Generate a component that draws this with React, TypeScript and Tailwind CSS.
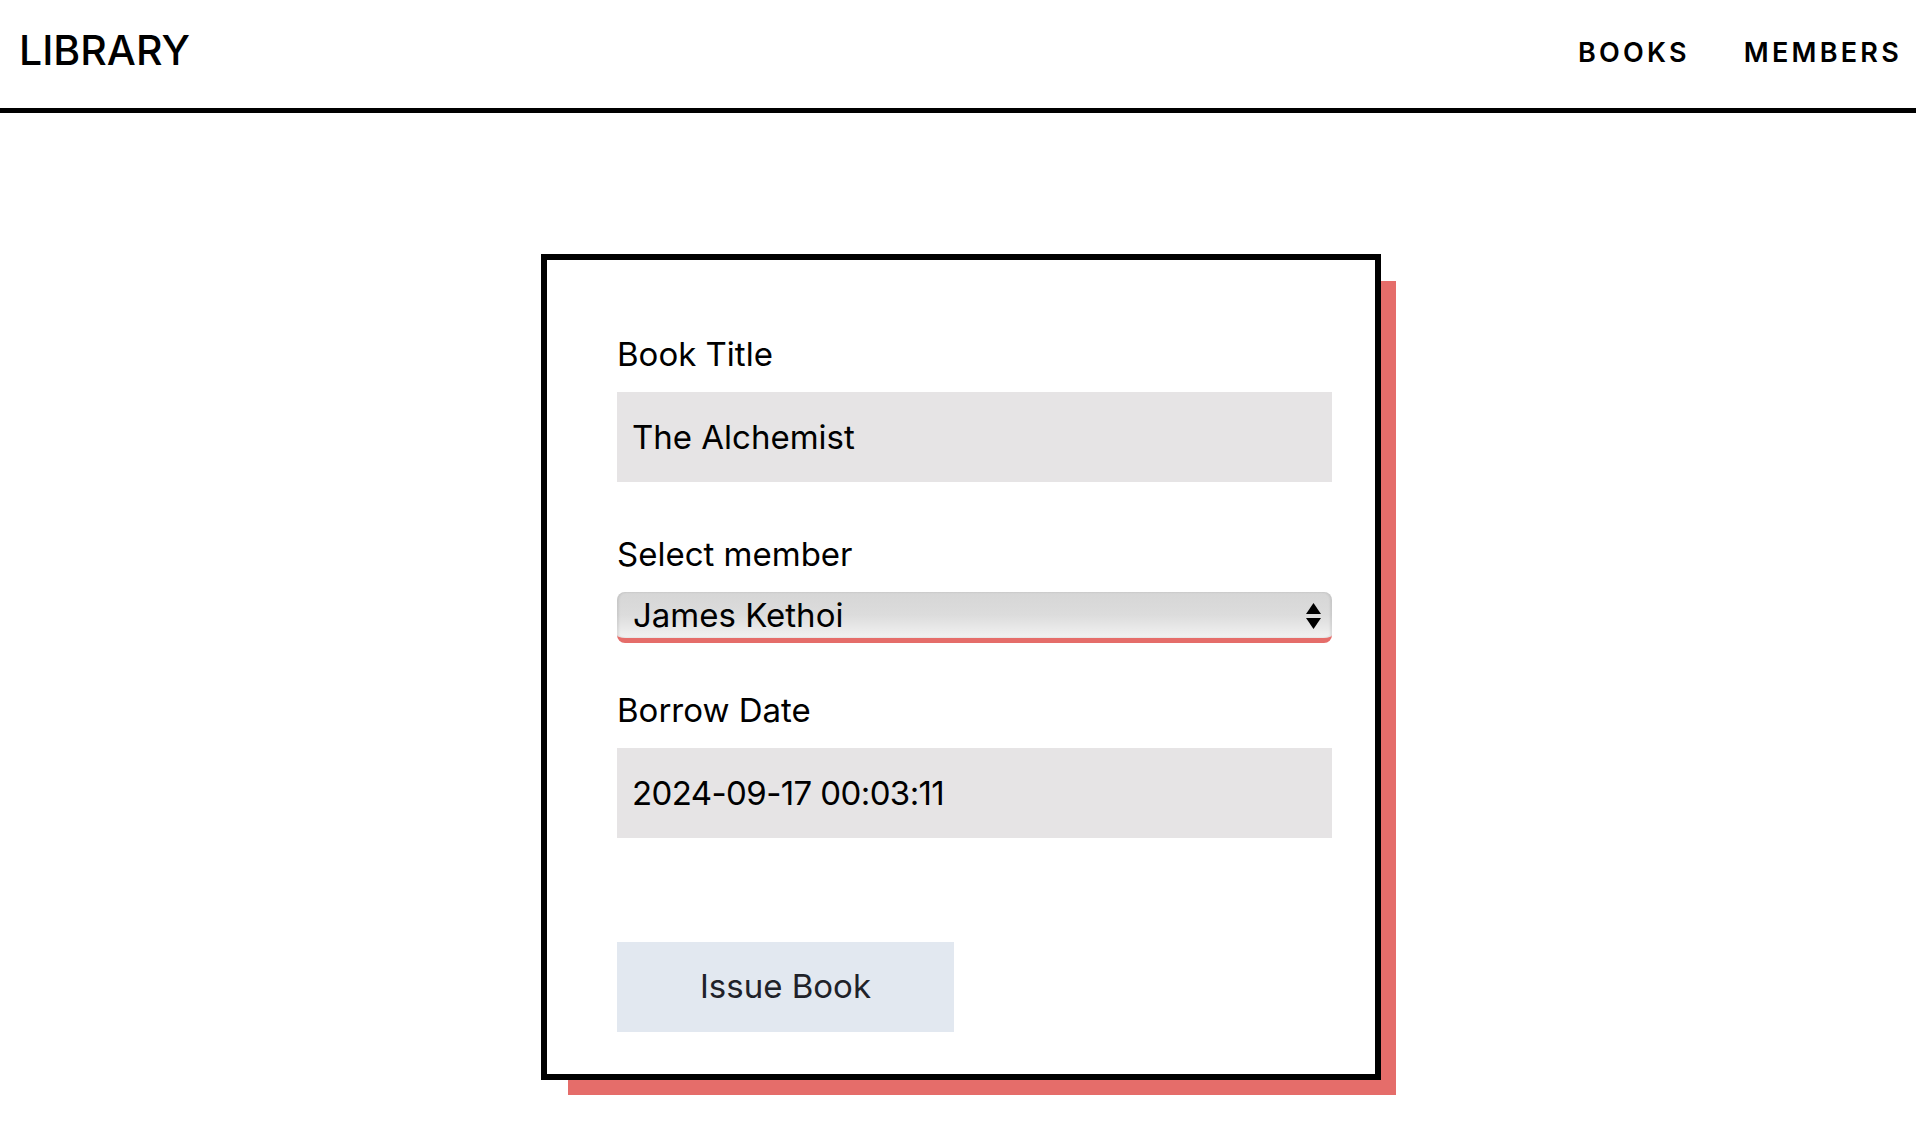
import { useState } from 'react';

const font = { fontFamily: 'Inter, "Noto Sans", sans-serif' };

function Field({ label, value, tight }: { label: string; value: string; tight?: boolean }) {
  return (
    <div className="flex flex-col">
      <label className="text-[33px] leading-[48px] text-black">{label}</label>
      <input
        readOnly
        value={value}
        className={
          tight
            ? 'mt-[14px] h-[90px] w-full bg-[#e6e4e5] px-[15px] text-[33px] tracking-[-0.6px] text-black outline-none'
            : 'mt-[14px] h-[90px] w-full bg-[#e6e4e5] px-[15px] text-[33px] text-black outline-none'
        }
      />
    </div>
  );
}

export default function App() {
  const [member, setMember] = useState('James Kethoi');

  return (
    <div className="min-h-screen bg-white text-black" style={font}>
      {/* top bar */}
      <header className="flex h-[113px] items-center justify-between border-b-[5px] border-black pl-[19px] pr-[14px]">
        <h1 className="mb-[8px] text-[41px] font-medium leading-none">LIBRARY</h1>
        <nav className="mb-[4px] flex items-center gap-[54px] text-[27px] font-semibold leading-none tracking-[0.12em]">
          <a href="#">BOOKS</a>
          <a href="#">MEMBERS</a>
        </nav>
      </header>

      <div className="mt-[141px] flex justify-center pl-[6px]">
        <form
          className="w-[840px] border-[6px] border-black bg-white pt-[70px] pr-[43px] pb-[42px] pl-[70px] shadow-[21px_21px_0_-6px_#e56d6a]"
          onSubmit={(e) => e.preventDefault()}
        >
          <Field label="Book Title" value="The Alchemist" />

          <div className="mt-[48px] flex flex-col">
            <label className="text-[33px] leading-[48px]">Select member</label>
            <div className="relative mt-[14px]">
              <select
                value={member}
                onChange={(e) => setMember(e.target.value)}
                className="h-[51px] w-full appearance-none rounded-[8px] border-b-[5px] border-[#e56d6a] bg-gradient-to-b from-[#d6d6d6] via-[#dcdcdc] to-[#f2f2f2] pl-[16px] pr-[40px] text-[33px] leading-none text-black shadow-[inset_2px_0_2px_rgba(0,0,0,0.08),inset_-2px_0_2px_rgba(0,0,0,0.08)] outline-none"
              >
                <option>James Kethoi</option>
                <option>Mary Wanjiku</option>
                <option>Peter Otieno</option>
              </select>
              <svg
                className="pointer-events-none absolute right-[10px] top-[10px]"
                width="17"
                height="29"
                viewBox="0 0 17 29"
              >
                <path d="M8.5 1 L16 12 L1 12 Z" fill="#000" />
                <path d="M1 16 L16 16 L8.5 27 Z" fill="#000" />
              </svg>
            </div>
          </div>

          <div className="mt-[43px]">
            <Field label="Borrow Date" value="2024-09-17 00:03:11" tight />
          </div>

          <button
            type="submit"
            className="mt-[104px] h-[90px] w-[337px] bg-[#e2e8f0] text-[33px] text-[#1f2229]"
          >
            Issue Book
          </button>
        </form>
      </div>
    </div>
  );
}
